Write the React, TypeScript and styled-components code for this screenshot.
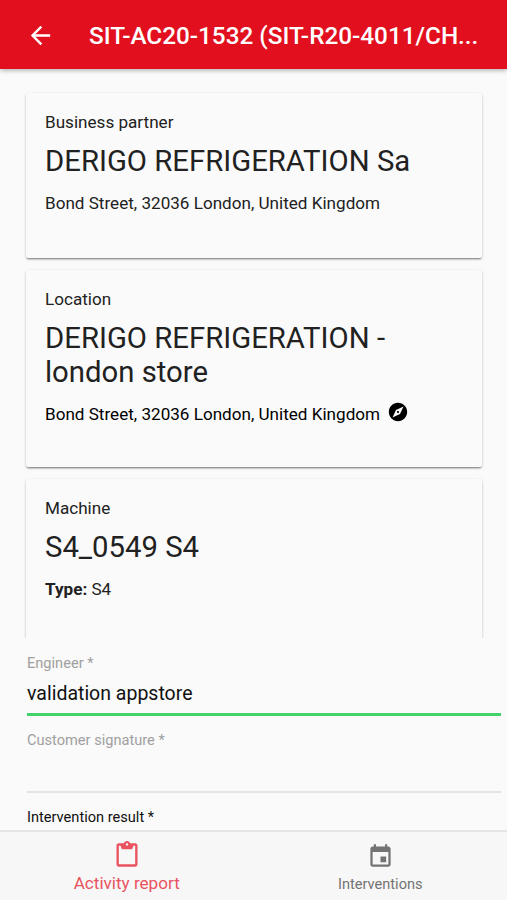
import React from "react";
import styled, { createGlobalStyle } from "styled-components";

const GlobalStyle = createGlobalStyle`
  * { box-sizing: border-box; }
  body { margin: 0; background: #fafafa; }
`;

const Screen = styled.div`
  width: 507px;
  height: 900px;
  display: flex;
  flex-direction: column;
  overflow: hidden;
  background: #fafafa;
  color: #212121;
  font-family: Roboto, sans-serif;
`;

const Header = styled.header`
  flex: 0 0 69px;
  display: flex;
  align-items: center;
  padding: 2px 24px 0 25.5px;
  background: #e2101e;
  color: #fff;
  box-shadow: 0 1px 5px rgba(0, 0, 0, 0.35);
`;

const Title = styled.h1`
  flex: 1;
  margin: 0 0 0 34.5px;
  font-size: 24.3px;
  line-height: 30px;
  font-weight: 500;
  white-space: nowrap;
`;

const Icon = styled.svg<{ $size: number }>`
  display: block;
  flex: none;
  width: ${(p) => p.$size}px;
  height: ${(p) => p.$size}px;
  fill: currentColor;
`;

const CardList = styled.main`
  flex: 0 0 569px;
  display: flex;
  flex-direction: column;
  gap: 12px;
  padding: 24px 25px 0 26px;
  overflow: hidden;
`;

const Card = styled.section<{ $height: number }>`
  flex: 0 0 ${(p) => p.$height}px;
  padding: 19px 19px;
  border-radius: 2px;
  background: #fafafa;
  box-shadow: 0 2px 2px -1px rgba(0, 0, 0, 0.42), 0 1px 3px rgba(0, 0, 0, 0.2);
`;

const CardLabel = styled.div`
  font-size: 17.1px;
  line-height: 20px;
`;

const CardTitle = styled.h2`
  margin: 12px 0 15px;
  font-size: 29.3px;
  line-height: 34px;
  font-weight: 400;
`;

const CardText = styled.div<{ $strong?: boolean }>`
  display: flex;
  align-items: flex-end;
  height: 20px;
  gap: 7px;
  font-size: 17.1px;
  line-height: 20px;
  color: ${(p) => (p.$strong ? "#000" : "#212121")};
  white-space: nowrap;

  svg {
    margin-bottom: 1px;
  }
`;

const Form = styled.form`
  flex: 1;
  padding: 16px 6px 0 27px;
`;

const Field = styled.div<{ $active?: boolean }>`
  height: 62px;
  margin-bottom: 15px;
  border-bottom: ${(p) => (p.$active ? "3px solid #42d36b" : "2px solid #e4e4e4")};
`;

const FieldLabel = styled.div<{ $dark?: boolean }>`
  font-size: 14.6px;
  line-height: 18px;
  color: ${(p) => (p.$dark ? "#111" : "#a0a0a0")};
`;

const FieldValue = styled.div`
  margin-top: 10px;
  font-size: 19.5px;
  line-height: 24px;
  color: #111;
`;

const TabBar = styled.nav`
  flex: 0 0 70px;
  display: grid;
  grid-template-columns: 1fr 1fr;
  border-top: 2px solid #e5e5e5;
  background: #f7f7f7;
`;

const Tab = styled.div<{ $active?: boolean }>`
  display: flex;
  flex-direction: column;
  align-items: center;
  gap: 4px;
  padding-top: ${(p) => (p.$active ? 9 : 11)}px;
  color: ${(p) => (p.$active ? "#e9535f" : "#737373")};
  font-size: ${(p) => (p.$active ? 17.1 : 14.6)}px;
  line-height: 20px;
`;

const paths = {
  back: "M20 11H7.83l5.59-5.59L12 4l-8 8 8 8 1.41-1.41L7.83 13H20v-2z",
  compass:
    "M12 10.9c-.61 0-1.1.49-1.1 1.1s.49 1.1 1.1 1.1c.61 0 1.1-.49 1.1-1.1s-.49-1.1-1.1-1.1zM12 2C6.48 2 2 6.48 2 12s4.48 10 10 10 10-4.48 10-10S17.52 2 12 2zm2.19 12.19L6 18l3.81-8.19L18 6l-3.81 8.19z",
  clipboard:
    "M19 2h-4.18C14.4.84 13.3 0 12 0c-1.3 0-2.4.84-2.82 2H5c-1.1 0-2 .9-2 2v16c0 1.1.9 2 2 2h14c1.1 0 2-.9 2-2V4c0-1.1-.9-2-2-2zm-7 0c.55 0 1 .45 1 1s-.45 1-1 1-1-.45-1-1 .45-1 1-1zm7 18H5V4h1.5l.7 2.2c.2.5.5.8 1 .8h7.6c.5 0 .8-.3 1-.8L17.500 4H19v16z",
  event:
    "M17 12h-5v5h5v-5zM16 1v2H8V1H6v2H5c-1.11 0-1.99.9-1.99 2L3 19c0 1.1.89 2 2 2h14c1.1 0 2-.9 2-2V5c0-1.1-.9-2-2-2h-1V1h-2zm3 18H5V8h14v11z",
};

function Glyph({ name, size }: { name: keyof typeof paths; size: number }) {
  return (
    <Icon $size={size} viewBox="0 0 24 24" aria-hidden="true">
      <path d={paths[name]} />
    </Icon>
  );
}

export default function App() {
  return (
    <>
      <GlobalStyle />
      <Screen>
        <Header>
          <Glyph name="back" size={29} />
          <Title>SIT-AC20-1532 (SIT-R20-4011/CH...</Title>
        </Header>
        <CardList>
          <Card $height={165}>
            <CardLabel>Business partner</CardLabel>
            <CardTitle>DERIGO REFRIGERATION Sa</CardTitle>
            <CardText>Bond Street, 32036 London, United Kingdom</CardText>
          </Card>
          <Card $height={197}>
            <CardLabel>Location</CardLabel>
            <CardTitle>
              DERIGO REFRIGERATION -<br />
              london store
            </CardTitle>
            <CardText $strong>
              Bond Street, 32036 London, United Kingdom
              <Glyph name="compass" size={22} />
            </CardText>
          </Card>
          <Card $height={197}>
            <CardLabel>Machine</CardLabel>
            <CardTitle>S4_0549 S4</CardTitle>
            <CardText>
              <span>
                <b>Type:</b> S4
              </span>
            </CardText>
          </Card>
        </CardList>
        <Form>
          <Field $active>
            <FieldLabel>Engineer *</FieldLabel>
            <FieldValue>validation appstore</FieldValue>
          </Field>
          <Field>
            <FieldLabel>Customer signature *</FieldLabel>
          </Field>
          <FieldLabel $dark>Intervention result *</FieldLabel>
        </Form>
        <TabBar>
          <Tab $active>
            <Glyph name="clipboard" size={28} />
            Activity report
          </Tab>
          <Tab>
            <Glyph name="event" size={27} />
            Interventions
          </Tab>
        </TabBar>
      </Screen>
    </>
  );
}
